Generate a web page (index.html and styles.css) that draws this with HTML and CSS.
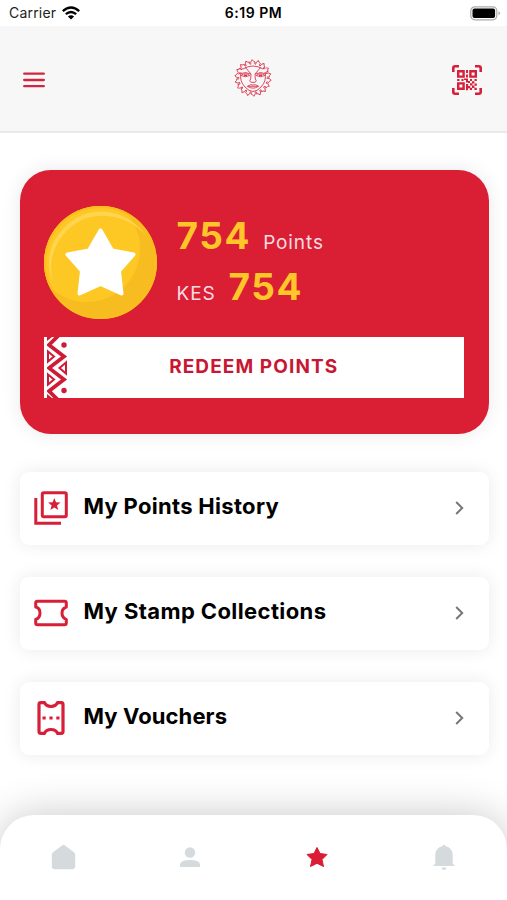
FILE: index.html
```html
<!DOCTYPE html>
<html lang="en">
    <head>
        <meta charset="UTF-8" />
        <title>My Points</title>
        <link rel="stylesheet" href="styles.css">
    </head>
    <body>
        <!-- status bar -->
        <div class="status">
            <div class="carrier">
                <span>Carrier</span>
                <svg width="18" height="14" viewBox="0 0 18 14" fill="none" stroke="#000" stroke-width="2.3">
                    <path d="M.8 5.2Q9-2.2 17.2 5.2M3.8 8.2Q9 3.7 14.2 8.2" />
                    <path d="M9 13.5L5.9 10.4Q9 7.9 12.1 10.4Z" fill="#000" stroke="none" />
                </svg>
            </div>
            <div class="time">6:19 PM</div>
            <svg class="battery" width="31" height="15" viewBox="0 0 31 15">
                <rect x=".8" y=".8" width="26" height="13" rx="4" fill="#fff" stroke="#aaa" stroke-width="1.2" />
                <rect x="2.5" y="2.5" width="22.6" height="9.6" rx="2" />
                <path d="M28.5 5.3q3 2 0 4z" fill="#aaa" />
            </svg>
        </div>

        <!-- header -->
        <header class="top">
            <svg width="22" height="16" viewBox="0 0 22 16" stroke="#cf2740" stroke-width="2.3" stroke-linecap="round">
                <path d="M1.2 1.7h19.6M1.2 8h19.6M1.2 14.2h19.6" />
            </svg>

            <svg class="sun" width="38" height="38" viewBox="-19 -19 38 38" fill="none" stroke="#db3850" stroke-width=".9" stroke-linejoin="round">
                <defs>
                    <path id="ray" d="M-2.2-13.6Q-3-16-.9-18.3Q.2-16.3 2.2-16Q.7-14.9 2.2-13.6" />
                </defs>
                <use href="#ray" />
                <use href="#ray" transform="rotate(20)" />
                <use href="#ray" transform="rotate(40)" />
                <use href="#ray" transform="rotate(60)" />
                <use href="#ray" transform="rotate(80)" />
                <use href="#ray" transform="rotate(100)" />
                <use href="#ray" transform="rotate(120)" />
                <use href="#ray" transform="rotate(140)" />
                <use href="#ray" transform="rotate(160)" />
                <use href="#ray" transform="rotate(180)" />
                <use href="#ray" transform="rotate(200)" />
                <use href="#ray" transform="rotate(220)" />
                <use href="#ray" transform="rotate(240)" />
                <use href="#ray" transform="rotate(260)" />
                <use href="#ray" transform="rotate(280)" />
                <use href="#ray" transform="rotate(300)" />
                <use href="#ray" transform="rotate(320)" />
                <use href="#ray" transform="rotate(340)" />
                <!-- face -->
                <path d="M-12-6Q-14 3-8 9Q-4 13.5 0 13.5Q4 13.5 8 9Q14 3 12-6M-10-9Q0-15 10-9" />
                <path d="M-8-11L-2-4L-2.3 1Q-5 4 0 4.5Q5 4 2.3 1L2-4L8-11M-13-4Q-8-7-2-4M13-4Q8-7 2-4" />
                <path d="M-12-2.5Q-7.5-6-3.2-2.5Q-7.5 0-12-2.5ZM12-2.5Q7.5-6 3.2-2.5Q7.5 0 12-2.5Z" />
                <path d="M-9-2.6h3M6-2.6h3" stroke-width="1.6" />
                <path d="M-5.5 8.3Q-2 5.8 0 7Q2 5.8 5.5 8.3Q0 12-5.5 8.3ZM-5.5 8.3h11" />
            </svg>

            <svg width="30" height="30" viewBox="0 0 30 30" fill="none" stroke="#d61f38">
                <path d="M1.3 7V3.2Q1.3 1.3 3.2 1.3H7M23 1.3h3.8q1.9 0 1.9 1.9V7M28.7 23v3.8q0 1.9-1.9 1.9H23M7 28.7H3.2q-1.9 0-1.9-1.9V23" stroke-width="2.6" />
                <path d="M6.2 6.2h5.4v5.4H6.2zM18.4 6.2h5.4v5.4h-5.4zM6.2 18.4h5.4v5.4H6.2z" stroke-width="2.4" />
                <path fill="#d61f38" stroke="none" d="M14 5h2v3h-2zM14 9.500h2v3h-2zM5.2 14h2.3v2H5.2zM9.5 14h2v2h-2zM12 13.4h4v4.2h-2V15h-2zM18 14h2v2h-2zM22.5 14h2.3v2h-2.3zM16 16h2v2h-2zM20 16.2h2.4v2.3H20zM14 19h2.2v2h2v2.2h-2.2v2H14zM18 18.2h2.4v2.2H18zM22.5 18.5h2.3v2.3h-2.3zM20 20.6h2.4V23H20zM17.8 22.8h2.3v2.2h-2.3zM22.4 22.8h2.4v2.2h-2.4z" />
            </svg>
        </header>

        <main>
            <!-- points card -->
            <section class="card">
                <div class="balance">
                    <svg width="113" height="113" viewBox="0 0 113 113">
                        <defs>
                            <clipPath id="coin"><circle cx="56.5" cy="56.5" r="56.5" /></clipPath>
                        </defs>
                        <g clip-path="url(#coin)">
                            <rect width="113" height="113" fill="#f7bd20" />
                            <circle cx="43" cy="43" r="53" fill="#fdc724" />
                            <path d="M9 77Q-3 45 20 22Q44-2 76 9Q91 15 103 30Q86 12 63 10Q37 8 20 28Q2 49 9 77Z" fill="#ffd54f" />
                        </g>
                        <circle cx="56.5" cy="56.5" r="55.5" fill="none" stroke="#fdbd1e" stroke-width="2" />
                        <path d="M56.5 24.5L68 44.5L89.5 48.5L75 65L77.5 87.5L56.5 78L35.5 87.5L38 65L23.5 48.5L45 44.5Z" fill="#fff" stroke="#fff" stroke-width="4" stroke-linejoin="round" />
                    </svg>
                    <div class="amounts">
                        <div class="row"><b>754</b><span class="points">Points</span></div>
                        <div class="row"><span class="kes">KES</span><b>754</b></div>
                    </div>
                </div>
                <div class="redeem">
                    <svg width="21" height="61" viewBox="0 0 21 61" fill="none" stroke="#cf1c36">
                        <path d="M13-3L2 8L17 19.5L2 31L17 42.5L2 54L13 65" stroke-width="3.8" />
                        <path d="M0 0H5L0 4ZM0 61H5L0 57Z" fill="#cf1c36" stroke="none" />
                        <path d="M1 14.5L7 19.5L1 24.5ZM1 37.5L7 42.5L1 47.5ZM19 25.5L12.5 31L19 36.5Z" stroke-width="2" />
                        <circle cx="17" cy="8" r="2.7" fill="#cf1c36" stroke="none" />
                        <circle cx="17" cy="53.5" r="2.7" fill="#cf1c36" stroke="none" />
                    </svg>
                    <span>REDEEM POINTS</span>
                </div>
            </section>

            <!-- menu list -->
            <div class="item">
                <svg class="icon" width="34" height="34" viewBox="0 0 34 34" fill="none" stroke="#d71f38" stroke-width="3">
                    <rect x="8.3" y="1.8" width="24" height="24" rx="1.5" />
                    <path d="M1.8 7V32.2H27" />
                    <path fill="#d71f38" stroke="none" d="M20.3 7l1.7 4.3 4.5.3-3.5 2.9 1.2 4.5-3.9-2.5-3.9 2.5 1.2-4.5-3.5-2.9 4.5-.3z" />
                </svg>
                <span class="t1">My Points History</span>
                <svg class="arrow" width="9" height="14" viewBox="0 0 9 14"><path d="M1.2 1L7.2 7L1.2 13" /></svg>
            </div>
            <div class="item">
                <svg class="icon" width="34" height="34" viewBox="0 0 34 34" fill="none" stroke="#d71f38" stroke-width="3" stroke-linejoin="round">
                    <path d="M3.5 5.2H30.5Q32.3 5.2 32.3 7V11Q28 12.5 28 17T32.3 23.500V27Q32.300 28.800 30.500 28.800H3.500Q1.700 28.800 1.700 27V23.500Q6 22 6 17T1.700 11V7Q1.700 5.200 3.500 5.200Z" />
                </svg>
                <span class="t2">My Stamp Collections</span>
                <svg class="arrow" width="9" height="14" viewBox="0 0 9 14"><path d="M1.2 1L7.2 7L1.2 13" /></svg>
            </div>
            <div class="item">
                <svg class="icon" width="34" height="34" viewBox="0 0 34 34" fill="none" stroke="#d71f38" stroke-width="3.2" stroke-linejoin="round">
                    <path d="M5 3.5Q5 1.7 6.8 1.7H10.5Q12 5.5 17 5.5T23.5 1.7H27.2Q29 1.7 29 3.5V30.5Q29 32.3 27.2 32.3H23.5Q22 28.5 17 28.5T10.5 32.3H6.8Q5 32.3 5 30.5Z" />
                    <path d="M8.5 17h3.2M15.4 17h3.2M22.3 17h3.2" />
                </svg>
                <span class="t3">My Vouchers</span>
                <svg class="arrow" width="9" height="14" viewBox="0 0 9 14"><path d="M1.2 1L7.2 7L1.2 13" /></svg>
            </div>
        </main>

        <!-- bottom menu -->
        <nav class="tabs">
            <svg width="28" height="28" viewBox="0 0 28 28"><path d="M13.3 2.2Q14.5 1.2 15.7 2.2L25 9.3Q26.2 10.3 26.2 12V23Q26.2 26.2 23 26.2H6Q2.800 26.200 2.800 23V12Q2.800 10.300 4 9.300Z" /></svg>
            <svg width="28" height="28" viewBox="0 0 28 28"><circle cx="14" cy="9.5" r="5.2" /><path d="M4 24V22Q4 17 14 17T24 22V24Z" /></svg>
            <svg class="on" width="28" height="28" viewBox="0 0 28 28"><path d="M14 4.5L17 10.5L24 11.5L19 16.5L20.5 23.5L14 20.3L7.5 23.5L9 16.5L4 11.5L11 10.5Z" stroke="#db1c34" stroke-linejoin="round" /></svg>
            <svg width="28" height="28" viewBox="0 0 28 28"><path d="M12.5 3Q14 .5 15.5 3Q22.7 5 22.7 12V20.5L25 23H3L5.3 20.5V12Q5.3 5 12.5 3ZM11.5 24.5H16.5Q16 27 14 27T11.5 24.5Z" /></svg>
        </nav>
    </body>
</html>
```
FILE: styles.css
```css
* {
    box-sizing: border-box;
}
body {
    margin: 0;
    height: 900px;
    display: flex;
    flex-direction: column;
    overflow: hidden;
    background: #fff;
    font-family: Inter, "Liberation Sans", sans-serif;
}
svg {
    display: block;
    flex: none;
}

/* status bar */
.status {
    height: 26px;
    padding: 0 6px 0 9px;
    display: grid;
    grid-template-columns: 1fr auto 1fr;
    align-items: center;
    font-size: 14px;
    line-height: 26px;
}
.carrier {
    display: flex;
    align-items: center;
    gap: 6px;
    color: #222;
    letter-spacing: 0.2px;
}
.time {
    font-weight: 600;
    letter-spacing: 0.5px;
    margin-left: -3px;
}
.battery {
    justify-self: end;
}

/* header */
.top {
    height: 107px;
    padding: 2px 25px 0 23px;
    display: grid;
    grid-template-columns: 1fr auto 1fr;
    align-items: center;
    background: #f7f7f7;
    border-bottom: 2px solid #e9e9e9;
}
.top svg:last-child {
    justify-self: end;
}
.sun {
    margin: 0 0 3px 1px;
}

main {
    flex: 1;
    padding: 36.5px 18.5px 0 19.5px;
}

/* points card */
.card {
    height: 264.5px;
    margin-bottom: 38px;
    padding: 36.5px 24.5px 0 24px;
    border-radius: 31px;
    background: #da1e34;
    box-shadow: 0 0 20px rgba(0, 0, 0, 0.09);
}
.balance {
    display: flex;
    gap: 20px;
}
.amounts {
    padding-top: 4px;
    color: #fbdde1;
}
.row {
    display: flex;
    align-items: baseline;
    height: 51px;
    line-height: 51px;
    font-size: 19px;
    letter-spacing: 0.9px;
}
.row b {
    font-size: 37px;
    letter-spacing: 1.6px;
    color: #ffc629;
}
.points {
    margin-left: 12px;
}
.kes {
    margin-right: 13px;
}
.redeem {
    height: 61px;
    margin-top: 18px;
    display: grid;
    align-items: center;
    justify-items: center;
    background: #fff;
}
.redeem svg,
.redeem span {
    grid-area: 1 / 1;
}
.redeem svg {
    justify-self: start;
    margin-left: 3.5px;
}
.redeem span {
    color: #c81732;
    font-size: 19px;
    font-weight: 700;
    letter-spacing: 1.1px;
    padding-bottom: 3px;
}

/* menu list */
.item {
    height: 73px;
    margin-bottom: 32px;
    padding: 0 25px 2px 14.5px;
    display: flex;
    align-items: center;
    border-radius: 9px;
    background: #fff;
    box-shadow: 0 0 18px rgba(0, 0, 0, 0.085);
    font-size: 22px;
    font-weight: 700;
}
.item span {
    margin-left: 15.5px;
    padding-bottom: 3px;
}
.t1 {
    letter-spacing: 0.3px;
}
.t2 {
    letter-spacing: 0.4px;
}
.t3 {
    letter-spacing: 0.1px;
}
.arrow {
    margin-left: auto;
    fill: none;
    stroke: #777;
    stroke-width: 2;
}

/* bottom menu */
.tabs {
    height: 85.5px;
    padding: 0 0 1px;
    display: grid;
    grid-template-columns: repeat(4, 1fr);
    justify-items: center;
    align-items: center;
    border-radius: 34px 34px 0 0;
    background: #fff;
    box-shadow: 0 0 40px rgba(0, 0, 0, 0.22);
    fill: #d5dadd;
}
.on {
    fill: #db1c34;
}
```
